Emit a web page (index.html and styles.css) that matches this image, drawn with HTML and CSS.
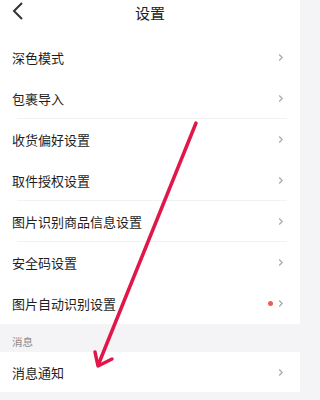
FILE: index.html
```html
<!DOCTYPE html>
<html>
<head>
<meta charset="utf-8">
<link rel="stylesheet" href="styles.css">
</head>
<body>
<div class="page">
  <header class="header">
    <svg class="back" width="12" height="18" viewBox="0 0 12 18"><path d="M10 1 L2 9 L10 17" fill="none" stroke="#333" stroke-width="2"/></svg>
    <div class="title">设置</div>
  </header>
  <div class="list">
    <div class="row"><span class="label">深色模式</span><span class="right"><svg class="chev" width="6" height="9" viewBox="0 0 6 9"><path d="M1.2 1.5 L4.2 4.5 L1.2 7.5" fill="none" stroke="#a8a8a8" stroke-width="1.2"/></svg></span></div>
    <div class="row sep"><span class="label">包裹导入</span><span class="right"><svg class="chev" width="6" height="9" viewBox="0 0 6 9"><path d="M1.2 1.5 L4.2 4.5 L1.2 7.5" fill="none" stroke="#a8a8a8" stroke-width="1.2"/></svg></span></div>
    <div class="row"><span class="label">收货偏好设置</span><span class="right"><svg class="chev" width="6" height="9" viewBox="0 0 6 9"><path d="M1.2 1.5 L4.2 4.5 L1.2 7.5" fill="none" stroke="#a8a8a8" stroke-width="1.2"/></svg></span></div>
    <div class="row sep"><span class="label">取件授权设置</span><span class="right"><svg class="chev" width="6" height="9" viewBox="0 0 6 9"><path d="M1.2 1.5 L4.2 4.5 L1.2 7.5" fill="none" stroke="#a8a8a8" stroke-width="1.2"/></svg></span></div>
    <div class="row sep"><span class="label">图片识别商品信息设置</span><span class="right"><svg class="chev" width="6" height="9" viewBox="0 0 6 9"><path d="M1.2 1.5 L4.2 4.5 L1.2 7.5" fill="none" stroke="#a8a8a8" stroke-width="1.2"/></svg></span></div>
    <div class="row"><span class="label">安全码设置</span><span class="right"><svg class="chev" width="6" height="9" viewBox="0 0 6 9"><path d="M1.2 1.5 L4.2 4.5 L1.2 7.5" fill="none" stroke="#a8a8a8" stroke-width="1.2"/></svg></span></div>
    <div class="row"><span class="label">图片自动识别设置</span><span class="right"><span class="dot"></span><svg class="chev" width="6" height="9" viewBox="0 0 6 9"><path d="M1.2 1.5 L4.2 4.5 L1.2 7.5" fill="none" stroke="#a8a8a8" stroke-width="1.2"/></svg></span></div>
  </div>
  <div class="section">消息</div>
  <div class="list">
    <div class="row short"><span class="label">消息通知</span><span class="right"><svg class="chev" width="6" height="9" viewBox="0 0 6 9"><path d="M1.2 1.5 L4.2 4.5 L1.2 7.5" fill="none" stroke="#a8a8a8" stroke-width="1.2"/></svg></span></div>
  </div>
  <div class="rest"></div>
  <svg class="arrow" width="300" height="400" viewBox="0 0 300 400">
    <path d="M196 123 L99 363" fill="none" stroke="#e0184a" stroke-width="3.5" stroke-linecap="round"/>
    <path d="M95 352 L98 366 L112 359" fill="none" stroke="#e0184a" stroke-width="3.5" stroke-linecap="round" stroke-linejoin="round"/>
  </svg>
</div>
</body>
</html>
```

FILE: styles.css
```css
html, body {
  margin: 0;
  padding: 0;
  background: #f4f4f6;
}
.page {
  position: relative;
  width: 300px;
  height: 400px;
  overflow: hidden;
  font-family: "Noto Sans CJK SC", "Noto Sans", sans-serif;
  color: #222;
  background: #f4f4f6;
}
.header {
  height: 37px;
  background: #fff;
  position: relative;
  display: flex;
  justify-content: center;
}
.back {
  position: absolute;
  left: 12px;
  top: 2px;
}
.title {
  font-size: 15px;
  line-height: 26px;
  color: #222;
}
.list {
  background: #fff;
}
.row {
  height: 41px;
  display: flex;
  align-items: center;
  justify-content: space-between;
  padding: 0 16px 0 12px;
  box-sizing: border-box;
  position: relative;
}
.row.short {
  height: 40px;
}
.row.sep::after {
  content: "";
  position: absolute;
  left: 17px;
  right: 13px;
  bottom: 0;
  height: 1px;
  background: #f2f2f2;
}
.label {
  font-size: 13px;
  color: #1e1e1e;
}
.right {
  display: flex;
  align-items: center;
  gap: 5px;
}
.chev {
  display: block;
}
.dot {
  width: 5px;
  height: 5px;
  border-radius: 50%;
  background: #f05a4f;
}
.section {
  height: 28px;
  box-sizing: border-box;
  padding: 11px 12px 0;
  font-size: 10.5px;
  line-height: 14px;
  color: #8a8a8a;
}
.rest {
  height: 10px;
}
.arrow {
  position: absolute;
  left: 0;
  top: 0;
  pointer-events: none;
}
```
